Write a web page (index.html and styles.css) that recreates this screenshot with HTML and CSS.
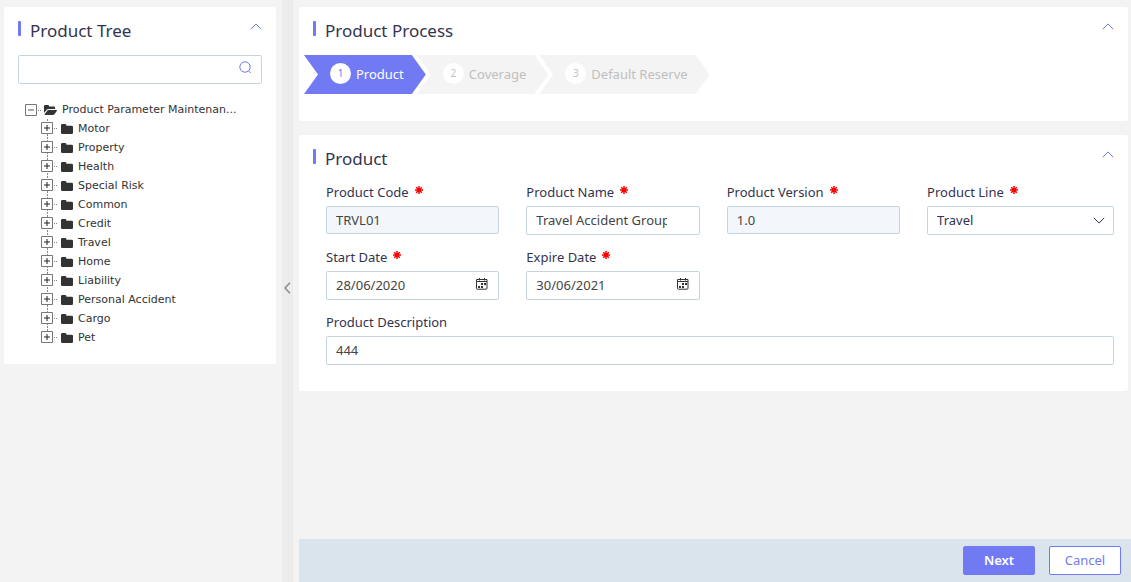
FILE: index.html
```html
<!DOCTYPE html>
<html lang="en">
<head>
<meta charset="utf-8">
<title>Product Maintenance</title>
<link rel="stylesheet" href="styles.css">
</head>
<body>
<svg class="sprite" aria-hidden="true">
  <symbol id="up" viewBox="0 0 12 7"><path d="M.8 6.2 6 .9l5.2 5.3" fill="none" stroke="currentColor"/></symbol>
  <symbol id="down" viewBox="0 0 12 7"><path d="M.8.8 6 6.1 11.2.8" fill="none" stroke="currentColor"/></symbol>
  <symbol id="star" viewBox="0 0 8 8"><path d="M4 0v8M0 4h8M1.2 1.2l5.6 5.6M6.8 1.2 1.2 6.8" fill="none" stroke="currentColor" stroke-width="1.5"/></symbol>
  <symbol id="cal" viewBox="0 0 12 12"><path d="M.5 1.500h10.500v8.700a1 1 0 0 1-1 1H1.500a1 1 0 0 1-1-1zM.5 3.500h10.500M3.500 0v2.500M8.500 0v2.500" fill="none" stroke="currentColor"/><path d="M5 5h2v2H5zM8 5h2v2H8zM2 8h2v2H2zM5 8h2v2H5z" fill="currentColor"/></symbol>
  <symbol id="folder" viewBox="0 0 12 10"><path d="M0 1.200Q0 0 1.200 0h3q1 0 1.200 1.200l.1.500h5.200q1.300 0 1.300 1.200v5.900Q12 10 10.800 10H1.200Q0 10 0 8.800z" fill="currentColor"/></symbol>
  <symbol id="open" viewBox="0 0 13 10"><path d="M0 8V1q0-1 1-1h3q1 0 1 1v.5h5q1 0 1 1V4H4.300Q3.200 4 2.500 5zM.5 9.600 3.200 5.700Q3.600 5 4.500 5h8q.9 0 .3.900l-2.200 3.200Q10 10 9 10H1Q.4 10 .5 9.600z" fill="currentColor"/></symbol>
  <symbol id="plus" viewBox="0 0 13 13"><path d="M.5.5h11v11H.5z" fill="#fff" stroke="#777"/><path d="M3 6h6M6 3v6" fill="none" stroke="#222"/></symbol>
  <symbol id="minus" viewBox="0 0 13 13"><path d="M.5.5h11v11H.5z" fill="#fff" stroke="#777"/><path d="M3 6h6" fill="none" stroke="#555"/></symbol>
</svg>
<div class="layout">
  <aside class="sidebar">
    <section class="card tree-card">
      <header class="card-head">
        <h2 class="title">Product Tree</h2>
        <button class="collapse" type="button" aria-label="Collapse product tree"><svg class="chev"><use href="#up"/></svg></button>
      </header>
      <div class="search">
        <input class="input" type="text" aria-label="Search products">
        <button class="search-btn" type="button" aria-label="Search"><svg class="glass" viewBox="0 0 13 13"><circle cx="6" cy="6" r="5.200" fill="none" stroke="currentColor"/><path d="m9.300 9.500 2.500 2.500" stroke="currentColor"/></svg></button>
      </div>
      <div class="tree">
        <div class="node root"><svg class="box"><use href="#minus"/></svg><i class="dots"></i><svg class="folder-open"><use href="#open"/></svg><span>Product Parameter Maintenan...</span></div>
        <ul class="nodes">
          <li class="node"><svg class="box"><use href="#plus"/></svg><i class="dots"></i><svg class="folder"><use href="#folder"/></svg><span>Motor</span></li>
          <li class="node"><svg class="box"><use href="#plus"/></svg><i class="dots"></i><svg class="folder"><use href="#folder"/></svg><span>Property</span></li>
          <li class="node"><svg class="box"><use href="#plus"/></svg><i class="dots"></i><svg class="folder"><use href="#folder"/></svg><span>Health</span></li>
          <li class="node"><svg class="box"><use href="#plus"/></svg><i class="dots"></i><svg class="folder"><use href="#folder"/></svg><span>Special Risk</span></li>
          <li class="node"><svg class="box"><use href="#plus"/></svg><i class="dots"></i><svg class="folder"><use href="#folder"/></svg><span>Common</span></li>
          <li class="node"><svg class="box"><use href="#plus"/></svg><i class="dots"></i><svg class="folder"><use href="#folder"/></svg><span>Credit</span></li>
          <li class="node"><svg class="box"><use href="#plus"/></svg><i class="dots"></i><svg class="folder"><use href="#folder"/></svg><span>Travel</span></li>
          <li class="node"><svg class="box"><use href="#plus"/></svg><i class="dots"></i><svg class="folder"><use href="#folder"/></svg><span>Home</span></li>
          <li class="node"><svg class="box"><use href="#plus"/></svg><i class="dots"></i><svg class="folder"><use href="#folder"/></svg><span>Liability</span></li>
          <li class="node"><svg class="box"><use href="#plus"/></svg><i class="dots"></i><svg class="folder"><use href="#folder"/></svg><span>Personal Accident</span></li>
          <li class="node"><svg class="box"><use href="#plus"/></svg><i class="dots"></i><svg class="folder"><use href="#folder"/></svg><span>Cargo</span></li>
          <li class="node"><svg class="box"><use href="#plus"/></svg><i class="dots"></i><svg class="folder"><use href="#folder"/></svg><span>Pet</span></li>
        </ul>
      </div>
    </section>
  </aside>
  <button class="divider" type="button" aria-label="Hide sidebar"><svg class="left" viewBox="0 0 7 12"><path d="M6 .8 1 6l5 5.200" fill="none" stroke="currentColor" stroke-width="1.400"/></svg></button>
  <div class="work">
    <main class="content">
      <section class="card process-card">
        <header class="card-head">
          <h2 class="title">Product Process</h2>
          <button class="collapse" type="button" aria-label="Collapse product process"><svg class="chev"><use href="#up"/></svg></button>
        </header>
        <ol class="steps">
          <li class="step active"><span class="num">1</span>Product</li>
          <li class="step"><span class="num">2</span>Coverage</li>
          <li class="step"><span class="num">3</span>Default Reserve</li>
        </ol>
      </section>
      <section class="card form-card">
        <header class="card-head">
          <h2 class="title">Product</h2>
          <button class="collapse" type="button" aria-label="Collapse product"><svg class="chev"><use href="#up"/></svg></button>
        </header>
        <form class="form" id="product-form">
          <div class="field"><label class="label" for="code">Product Code <svg class="star"><use href="#star"/></svg></label><input class="input readonly" id="code" type="text" value="TRVL01" readonly></div>
          <div class="field"><label class="label" for="name">Product Name <svg class="star"><use href="#star"/></svg></label><input class="input clipped" id="name" type="text" value="Travel Accident Group"></div>
          <div class="field"><label class="label" for="version">Product Version <svg class="star"><use href="#star"/></svg></label><input class="input readonly" id="version" type="text" value="1.0" readonly></div>
          <div class="field"><label class="label" for="line">Product Line <svg class="star"><use href="#star"/></svg></label><div class="control"><select class="input select" id="line"><option>Travel</option></select><svg class="chev select-icon"><use href="#down"/></svg></div></div>
          <div class="field"><label class="label" for="start">Start Date <svg class="star"><use href="#star"/></svg></label><div class="control"><input class="input" id="start" type="text" value="28/06/2020"><svg class="cal"><use href="#cal"/></svg></div></div>
          <div class="field"><label class="label" for="expire">Expire Date <svg class="star"><use href="#star"/></svg></label><div class="control"><input class="input" id="expire" type="text" value="30/06/2021"><svg class="cal"><use href="#cal"/></svg></div></div>
          <div class="field wide"><label class="label" for="desc">Product Description</label><input class="input" id="desc" type="text" value="444"></div>
        </form>
      </section>
    </main>
    <footer class="footer">
      <button class="btn primary" type="submit" form="product-form">Next</button>
      <button class="btn" type="button">Cancel</button>
    </footer>
  </div>
</div>
</body>
</html>
```
FILE: styles.css
```css
* { box-sizing: border-box; }
body {
  margin: 0;
  background: #f3f3f3;
  color: #33334f;
  font: 13px/20px "Noto Sans", "Open Sans", sans-serif;
}
button, input, select { font: inherit; color: inherit; }
button { cursor: pointer; }
svg { display: block; flex: none; }
.sprite { display: none; }

.layout {
  display: grid;
  grid-template-columns: 282px 11px minmax(0, 1fr);
  min-height: 100vh;
}
.sidebar { padding: 7px 6px 7px 4px; }
.card { background: #fff; border-radius: 3px; }
.tree-card { padding: 12px 14px 17px; }

.card-head { display: flex; justify-content: space-between; align-items: flex-start; }
.title {
  display: flex;
  gap: 9px;
  margin: 0;
  font-size: 17px;
  line-height: 24px;
  font-weight: 400;
}
.title::before {
  content: "";
  width: 3px;
  height: 15px;
  margin-top: 2px;
  border-radius: 1px;
  background: #717af2;
}
.collapse { padding: 4px 0; border: 0; background: none; color: #717af2; }
.chev { width: 12px; height: 7px; }

.input {
  display: block;
  width: 100%;
  height: 29px;
  padding: 0 9px 2px;
  border: 1px solid #c5d5e0;
  border-radius: 2px;
  background: #fff;
  color: #444;
}
.search { position: relative; margin-top: 12px; }
.search-btn {
  position: absolute;
  top: 6px;
  right: 10px;
  padding: 0;
  border: 0;
  background: none;
  color: #717af2;
}
.glass { width: 13px; height: 13px; }

.tree { padding: 17px 0 0 7px; font: 11px/19px "DejaVu Sans", sans-serif; color: #333; }
.nodes {
  margin: 0 0 0 16px;
  padding: 0;
  list-style: none;
  background: repeating-linear-gradient(#888 0 2px, #fff 2px 3px) 6px 0 / 1px calc(100% - 10px) no-repeat;
}
.node { display: flex; align-items: center; white-space: nowrap; }
.node.root { line-height: 18px; }
.box { width: 13px; height: 13px; }
.dots { width: 3px; margin-right: 4px; border-top: 1px dotted #888; }
.root .dots { margin-right: 3px; }
.folder { width: 12px; height: 10px; margin-right: 5px; color: #333; }
.folder-open { width: 13px; height: 10px; margin-right: 5px; color: #333; }

.divider {
  display: flex;
  align-items: center;
  justify-content: center;
  padding: 0 0 6px;
  border: 0;
  background: #ececec;
  color: #888;
}
.left { width: 7px; height: 12px; }

.work { display: flex; flex-direction: column; padding-left: 6px; }
.content {
  flex: 1;
  display: flex;
  flex-direction: column;
  gap: 14px;
  padding: 7px 3px 14px 0;
}
.process-card { padding: 12px 14px 27px; }
.steps {
  display: flex;
  margin: 12px 0 0 -9px;
  padding: 0;
  list-style: none;
}
.step {
  display: flex;
  align-items: center;
  gap: 5px;
  height: 39px;
  padding: 0 22px 2px 26px;
  margin-right: -9px;
  background: #f4f4f4;
  color: #bfbfbf;
  clip-path: polygon(0 0, calc(100% - 14px) 0, 100% 50%, calc(100% - 14px) 100%, 0 100%, 14px 50%);
}
.step.active { background: #717af2; color: #fff; }
.num {
  width: 21px;
  height: 21px;
  border-radius: 50%;
  background: #fff;
  color: #bfbfbf;
  font-size: 10px;
  line-height: 21px;
  text-align: center;
}
.active .num { color: #717af2; }

.form-card { padding: 12px 14px 26px; }
.form {
  display: grid;
  grid-template-columns: repeat(3, 22%) minmax(0, 1fr);
  gap: 12px 27px;
  margin: 11px 0 0 13px;
}
.field { display: flex; flex-direction: column; gap: 4px; }
.wide { grid-column: 1 / -1; }
.label { display: flex; gap: 6px; }
.star { width: 8px; height: 8px; margin-top: 4px; color: #f00; }
.readonly { height: 28px; padding-bottom: 0; background: #f3f7fb; }
.clipped { padding-right: 32px; }
.control { position: relative; }
.select { appearance: none; color: #33334f; }
.select-icon { position: absolute; top: 11px; right: 9px; pointer-events: none; }
.cal { position: absolute; top: 7px; right: 11px; width: 12px; height: 12px; color: #333; }

.footer {
  display: flex;
  justify-content: flex-end;
  gap: 14px;
  padding: 7px 10px;
  background: #dae4ec;
}
.btn {
  width: 72px;
  height: 29px;
  padding: 0 0 2px;
  border: 1px solid #717af2;
  border-radius: 2px;
  background: #fff;
  color: #717af2;
}
.btn.primary { background: #717af2; color: #fff; font-weight: 600; }
```
